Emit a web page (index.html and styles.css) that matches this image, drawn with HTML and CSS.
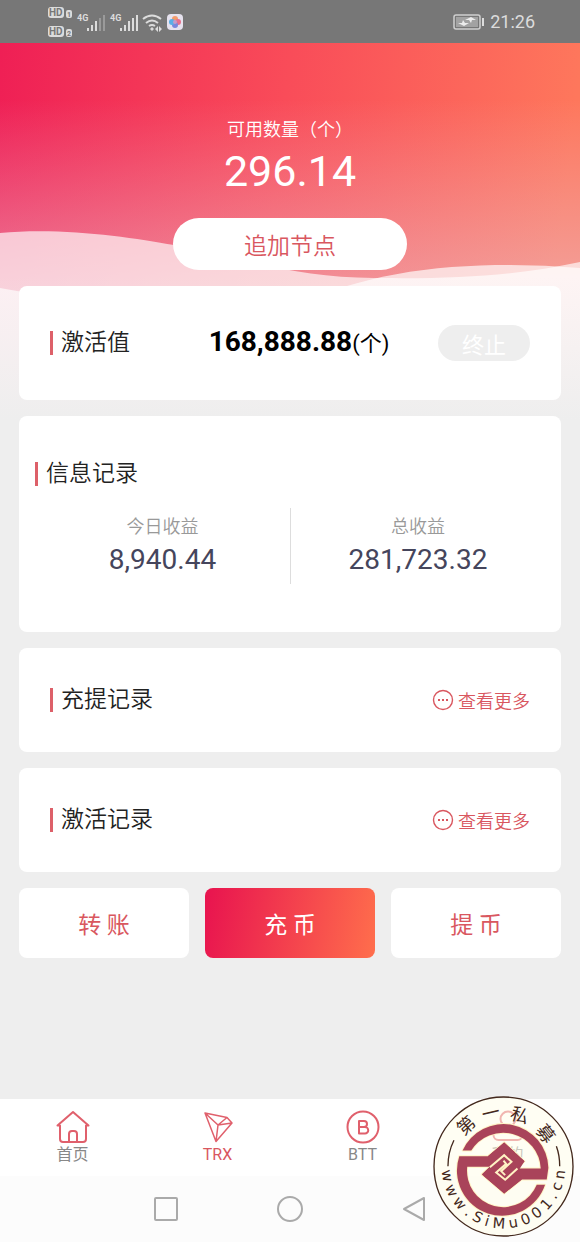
FILE: index.html
```html
<!DOCTYPE html>
<html lang="zh-CN">
<head>
    <meta charset="UTF-8">
    <meta name="viewport" content="width=device-width, initial-scale=1.0">
    <title>TRX</title>
    <link rel="stylesheet" href="styles.css">
</head>
<body>
    <div class="status-bar">
        <svg class="status-icons" width="140" height="34" viewBox="0 0 140 34" aria-hidden="true">
            <g fill="#dcdcdc">
                <rect x="0" y="2" width="16" height="11" rx="3"/>
                <rect x="0" y="21" width="16" height="11" rx="3"/>
                <rect x="18" y="5" width="6" height="8" rx="2"/>
                <rect x="18" y="24" width="6" height="8" rx="2"/>
            </g>
            <g class="status-hd">
                <text x="1" y="11">HD</text>
                <text x="1" y="30">HD</text>
            </g>
            <g class="status-sim">
                <text x="19" y="12">1</text>
                <text x="19" y="31">2</text>
            </g>
            <g class="status-4g">
                <text x="29" y="16">4G</text>
                <text x="62" y="16">4G</text>
            </g>
            <g fill="#dcdcdc">
                <path d="M39 23h2v3h-2zM43 20h2v6h-2zM47 16h2v10h-2z"/>
                <path d="M51 13h2v13h-2zM55 10h2v16h-2z" opacity=".35"/>
                <path d="M72 23h2v3h-2zM76 20h2v6h-2zM80 16h2v10h-2zM84 13h2v13h-2zM88 10h2v16h-2z"/>
            </g>
            <g fill="none" stroke="#dcdcdc" stroke-width="2">
                <path d="M95 14q9-7 18 0M98 18q6-5 12 0M101 21q3-2 6 0"/>
            </g>
            <path d="M104 22l2 2-2 2-2-2zM110 21l-3 3 3 3zM111 21l3 3-3 3z" fill="#dcdcdc"/>
            <rect x="119" y="9" width="16" height="16" rx="4" fill="#e6e2ee"/>
            <circle cx="127" cy="14" r="3" fill="#f29a6a"/>
            <circle cx="130" cy="17" r="3" fill="#e6708c"/>
            <circle cx="127" cy="20" r="3" fill="#7a86dc"/>
            <circle cx="124" cy="17" r="3" fill="#5aaee6"/>
            <circle cx="127" cy="17" r="2" fill="#c79ac8"/>
        </svg>
        <div class="status-right">
            <svg width="32" height="16" viewBox="0 0 32 16" aria-hidden="true">
                <rect x="1" y="1" width="26" height="14" rx="2" fill="none" stroke="#cfcfcf" stroke-width="1.5"/>
                <rect x="3" y="3" width="22" height="10" fill="#a2a2a2"/>
                <path d="M5 9h4l1-3 2 3h4l-5 3zM23 6h-4l-1 3-2-3h-4l6-3z" fill="#ececec"/>
                <path d="M30 4v8" stroke="#dcdcdc" stroke-width="2"/>
            </svg>
            <span>21:26</span>
        </div>
    </div>

    <main class="page">
        <svg class="waves" viewBox="0 0 580 377" preserveAspectRatio="none" aria-hidden="true">
            <defs>
                <linearGradient id="base" x1="0" y1="0" x2="1" y2="0.08">
                    <stop offset="0" stop-color="#ef1f55"/>
                    <stop offset=".5" stop-color="#f94c59"/>
                    <stop offset="1" stop-color="#fe775c"/>
                </linearGradient>
                <linearGradient id="haze" x1="0" y1="0" x2="0" y2="1">
                    <stop offset=".15" stop-color="#e8c0d4" stop-opacity="0"/>
                    <stop offset=".62" stop-color="#eac2ce" stop-opacity=".5"/>
                </linearGradient>
                <linearGradient id="fade" x1="0" y1="0" x2="0" y2="1">
                    <stop offset=".62" stop-color="#eeeeee" stop-opacity="0"/>
                    <stop offset="1" stop-color="#eeeeee"/>
                </linearGradient>
            </defs>
            <rect width="580" height="377" fill="url(#base)"/>
            <rect width="580" height="377" fill="url(#haze)"/>
            <path d="M0 190C60 184 130 194 174 202C250 217 300 236 380 235C460 236 520 232 580 219V377H0Z" fill="#fff" fill-opacity=".66"/>
            <path d="M0 245Q60 256 130 265H290C360 232 430 222 510 222Q545 222 580 225V377H0Z" fill="#fff" fill-opacity=".68"/>
            <rect width="580" height="377" fill="url(#fade)"/>
        </svg>

        <section class="balance">
            <p class="balance-label">可用数量（个）</p>
            <p class="balance-value">296.14</p>
            <button class="add-node" type="button">追加节点</button>
        </section>

        <section class="card card-active">
            <h2 class="title">激活值</h2>
            <p class="active-value"><strong>168,888.88</strong>(个)</p>
            <button class="stop" type="button">终止</button>
        </section>

        <section class="card card-info">
            <h2 class="title">信息记录</h2>
            <div class="stats">
                <div class="stat">
                    <p class="stat-label">今日收益</p>
                    <p class="stat-value">8,940.44</p>
                </div>
                <div class="stat">
                    <p class="stat-label">总收益</p>
                    <p class="stat-value">281,723.32</p>
                </div>
            </div>
        </section>

        <section class="card card-record">
            <h2 class="title">充提记录</h2>
            <a class="more" href="#">
                <svg width="22" height="22" viewBox="0 0 22 22" aria-hidden="true">
                    <circle cx="11" cy="11" r="9.5" fill="none" stroke="currentColor" stroke-width="1.4"/>
                    <path d="M6 10h2v2H6zM10 10h2v2h-2zM14 10h2v2h-2z" fill="currentColor"/>
                </svg>
                查看更多
            </a>
        </section>

        <section class="card card-record">
            <h2 class="title">激活记录</h2>
            <a class="more" href="#">
                <svg width="22" height="22" viewBox="0 0 22 22" aria-hidden="true">
                    <circle cx="11" cy="11" r="9.5" fill="none" stroke="currentColor" stroke-width="1.4"/>
                    <path d="M6 10h2v2H6zM10 10h2v2h-2zM14 10h2v2h-2z" fill="currentColor"/>
                </svg>
                查看更多
            </a>
        </section>

        <div class="actions">
            <button class="action" type="button">转 账</button>
            <button class="action action-primary" type="button">充 币</button>
            <button class="action" type="button">提 币</button>
        </div>
    </main>

    <footer class="footer">
        <nav class="tabs">
            <a class="tab" href="#">
                <svg width="34" height="34" viewBox="0 0 34 34" aria-hidden="true">
                    <path d="M4 15.500H1.500L17 2l15.500 13.500H30V29q0 3-3 3H7q-3 0-3-3ZM13 32V24q0-3 3-3h2q3 0 3 3v8"/>
                </svg>
                <span>首页</span>
            </a>
            <a class="tab tab-current" href="#">
                <svg width="34" height="34" viewBox="0 0 34 34" aria-hidden="true">
                    <path d="M4 3L26 7.500L31 13L15 31.500ZM4 3L17 15L31 13M26 7.500L17 15L15 31.500"/>
                </svg>
                <span>TRX</span>
            </a>
            <a class="tab" href="#">
                <svg width="34" height="34" viewBox="0 0 34 34" aria-hidden="true">
                    <circle cx="17" cy="17" r="15.500"/>
                    <path d="M13 11h5a3 3 0 0 1 0 6H13zM13 17h6a3 3 0 0 1 0 6.500H13z"/>
                </svg>
                <span>BTT</span>
            </a>
            <a class="tab" href="#">
                <svg width="34" height="34" viewBox="0 0 34 34" aria-hidden="true">
                    <circle cx="17" cy="9" r="7.500"/>
                    <rect x="2.500" y="20" width="29" height="10" rx="5"/>
                </svg>
                <span>我的</span>
            </a>
        </nav>
        <div class="system-nav">
            <button type="button" aria-label="最近任务">
                <svg width="26" height="28" viewBox="0 0 26 28"><rect x="2" y="3" width="22" height="22" rx="1"/></svg>
            </button>
            <button type="button" aria-label="主屏幕">
                <svg width="26" height="28" viewBox="0 0 26 28"><circle cx="13" cy="14" r="12"/></svg>
            </button>
            <button type="button" aria-label="返回">
                <svg width="26" height="28" viewBox="0 0 26 28"><path d="M23 3v22L3 14Z"/></svg>
            </button>
        </div>

        <svg class="seal" viewBox="20 14 430 430" role="img" aria-label="第一私募 www.SiMu001.cn">
            <defs>
                <path id="seal-arc" d="M52 196A186 186 0 1 0 418 196"/>
            </defs>
            <!-- cream disc, see-through enough to show the tab below -->
            <circle cx="235" cy="229" r="209" fill="#fffdea" fill-opacity=".55"/>
            <circle cx="235" cy="229" r="209" fill="none" stroke="#43281c" stroke-width="4"/>
            <path d="M68 228Q68 186 86 150M404 228Q404 195 394 168" fill="none" stroke="#43281c" stroke-width="4"/>
            <g transform="translate(90 75)">
                <g fill="#a9435a" stroke="#fff3c4" stroke-width="6" stroke-linejoin="round" paint-order="stroke">
                    <path d="M22 106A135 135 0 0 1 280 158L275 193H200L147 235L80 178L125 138L147 82L208 138L186 160H257A113 113 0 0 0 48 106Z"/>
                    <path d="M270 209A135 135 0 0 1 12 123H98L147 82L180 112L104 178H80L104 155H36A109 109 0 0 0 245 209Z"/>
                </g>
                <path d="M147 82L208 138L147 235L80 178L104 155L98 123Z" fill="#a9435a"/>
                <path d="M186 160L208 138L170 110L120 200L147 235L200 193Z" fill="#a9435a"/>
                <path d="M104 156L147 120L169 140L138 168L150 180M187 160L150 194L123 172L153 146L145 136" fill="none" stroke="#fff3c4" stroke-width="6"/>
            </g>
            <g class="seal-name">
                <text transform="translate(122 105) rotate(-42)" y="20">第</text>
                <text transform="translate(197 67) rotate(-13)" y="20">一</text>
                <text transform="translate(284 74) rotate(17)" y="20">私</text>
                <text transform="translate(362 130) rotate(52)" y="20">募</text>
            </g>
            <text class="seal-site"><textPath href="#seal-arc" startOffset="50%">w w w . S i M u 0 0 1 . c n</textPath></text>
        </svg>
    </footer>
</body>
</html>
```

FILE: styles.css
```css
* {
    margin: 0;
    padding: 0;
    box-sizing: border-box;
}

body {
    display: flex;
    flex-direction: column;
    min-height: 100vh;
    font-family: Roboto, "Noto Sans CJK SC", sans-serif;
    background: #eee;
    color: #222;
}

button {
    border: 0;
    font-family: inherit;
    cursor: pointer;
}

a {
    color: inherit;
    text-decoration: none;
}

/* status bar */
.status-bar {
    display: flex;
    align-items: center;
    justify-content: space-between;
    height: 43px;
    padding: 0 45px 0 48px;
    background: #777;
    color: #dcdcdc;
    font-size: 18px;
}

.status-icons text {
    fill: #dcdcdc;
    font-weight: bold;
}

.status-icons .status-hd text {
    fill: #777;
    font-size: 10px;
}

.status-icons .status-sim text {
    fill: #777;
    font-size: 7px;
}

.status-4g {
    font-size: 9px;
}

.status-right {
    display: flex;
    align-items: center;
    gap: 5px;
}

/* page */
.page {
    position: relative;
    display: flex;
    flex-direction: column;
    gap: 16px;
    padding: 0 19px 24px;
}

.waves {
    position: absolute;
    top: 0;
    left: 0;
    width: 100%;
    height: 377px;
    z-index: -1;
}

.balance {
    padding-top: 74px;
    text-align: center;
    color: #fff;
}

.balance-label {
    font-size: 18px;
    line-height: 26px;
}

.balance-value {
    font-size: 43px;
    line-height: 56px;
}

.add-node {
    width: 43%;
    height: 52px;
    margin-top: 19px;
    border-radius: 26px;
    background: #fff;
    color: #d9575f;
    font-size: 23px;
}

.card {
    background: #fff;
    border-radius: 8px;
}

.title {
    display: flex;
    align-items: center;
    gap: 8px;
    font-size: 23px;
    line-height: 32px;
    font-weight: 350;
}

.title::before {
    content: "";
    width: 3px;
    height: 24px;
    background: #dd6069;
}

.card-active {
    display: flex;
    align-items: center;
    justify-content: space-between;
    padding: 38px 31px;
}

.card-active .title {
    min-width: 110px;
}

.active-value {
    color: #000;
    font-size: 22px;
    line-height: 36px;
}

.active-value strong {
    font-size: 28px;
}

.stop {
    width: 92px;
    height: 36px;
    border-radius: 18px;
    background: #eee;
    color: #fff;
    font-size: 22px;
}

.card-info {
    padding: 42px 16px 48px;
}

.stats {
    display: grid;
    grid-template-columns: 1fr 1fr;
    margin-top: 18px;
}

.stat {
    height: 76px;
    padding-top: 5px;
    text-align: center;
}

.stat + .stat {
    border-left: 1px solid #ddd;
}

.stat-label {
    color: #999;
    font-size: 18px;
    line-height: 28px;
}

.stat-value {
    color: #45455c;
    font-size: 28px;
    line-height: 38px;
}

.card-record {
    display: flex;
    align-items: center;
    justify-content: space-between;
    padding: 36px 31px;
}

.more {
    display: flex;
    align-items: center;
    gap: 4px;
    color: #d9575f;
    font-size: 18px;
}

.add-node,
.balance-label,
.stat-label,
.more {
    font-weight: 350;
}

.actions {
    display: grid;
    grid-template-columns: repeat(3, 1fr);
    gap: 16px;
}

.action {
    height: 70px;
    border-radius: 8px;
    background: #fff;
    color: #d9575f;
    font-size: 23px;
}

.action-primary {
    background: linear-gradient(100deg, #e8134f, #ff6e4c);
    color: #fff;
}

/* footer */
.footer {
    position: relative;
    margin-top: auto;
    background: #fcfcfc;
}

.tabs {
    display: grid;
    grid-template-columns: repeat(4, 1fr);
    background: #fff;
}

.tab {
    display: flex;
    flex-direction: column;
    align-items: center;
    padding: 11px 0 10px;
    color: #888;
    font-size: 16px;
    line-height: 22px;
}

.tab svg {
    fill: none;
    stroke: #e0606c;
    stroke-width: 2;
    stroke-linejoin: round;
}

.tab-current {
    color: #d9575f;
}

.tab-current svg {
    stroke-width: 1.5;
}

.system-nav {
    display: flex;
    justify-content: center;
    align-items: center;
    gap: 98px;
    height: 66px;
}

.system-nav button {
    background: none;
}

.system-nav svg {
    display: block;
    fill: none;
    stroke: #aaa;
    stroke-width: 2;
    stroke-linejoin: round;
}

.seal {
    position: absolute;
    right: 5px;
    bottom: 4px;
    width: 143px;
    height: 143px;
}

.seal text {
    fill: #43281c;
    text-anchor: middle;
}

.seal-name {
    font-family: "Noto Sans CJK SC", sans-serif;
    font-size: 54px;
}

.seal-site {
    font-family: "DejaVu Sans", sans-serif;
    font-size: 44px;
}
```
